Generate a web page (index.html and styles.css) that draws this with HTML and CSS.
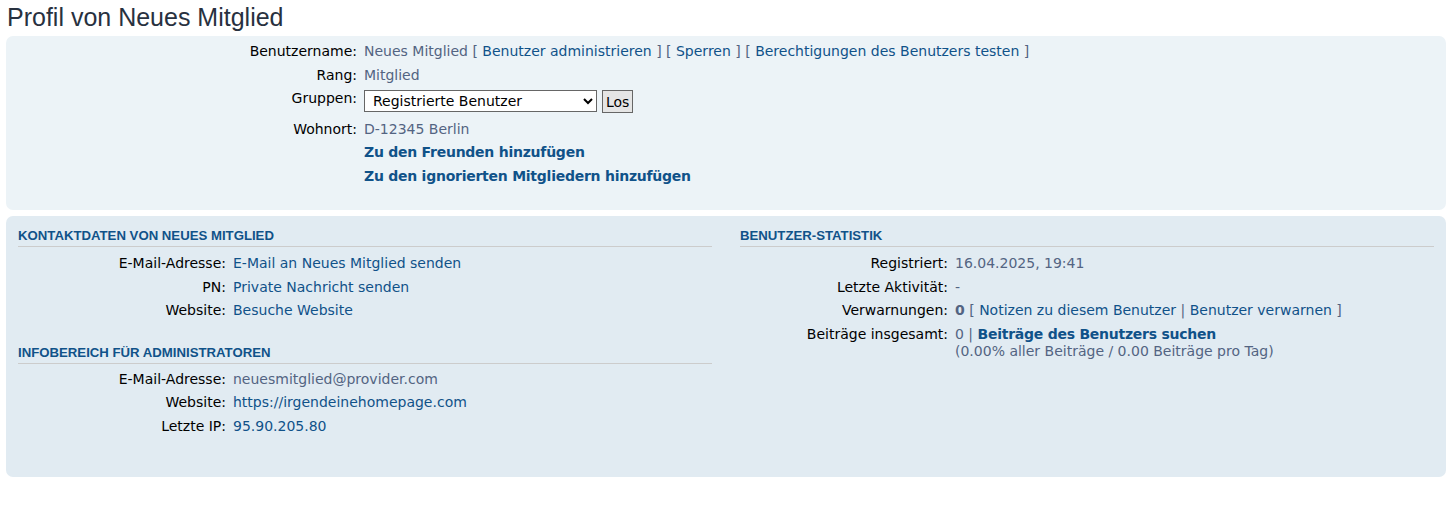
FILE: index.html
```html
<!DOCTYPE html>
<html lang="de">
<head>
<meta charset="utf-8">
<title>Profil von Neues Mitglied</title>
<link rel="stylesheet" href="styles.css">
</head>
<body>
<div class="page">
  <h2 class="title">Profil von Neues Mitglied</h2>

  <div class="panel panel-light">
    <dl class="info top">
      <div class="row"><dt>Benutzername:</dt><dd><span class="val">Neues Mitglied</span> <span class="val">[</span> <a href="#">Benutzer administrieren</a> <span class="val">]</span> <span class="val">[</span> <a href="#">Sperren</a> <span class="val">]</span> <span class="val">[</span> <a href="#">Berechtigungen des Benutzers testen</a> <span class="val">]</span></dd></div>
      <div class="row"><dt>Rang:</dt><dd class="val">Mitglied</dd></div>
      <div class="row row-form"><dt>Gruppen:</dt><dd class="form"><select class="sel"><option>Registrierte Benutzer</option></select><button class="btn" type="button">Los</button></dd></div>
      <div class="row"><dt>Wohnort:</dt><dd class="val">D-12345 Berlin</dd></div>
      <div class="row"><dt></dt><dd><a class="strong" href="#">Zu den Freunden hinzufügen</a></dd></div>
      <div class="row"><dt></dt><dd><a class="strong" href="#">Zu den ignorierten Mitgliedern hinzufügen</a></dd></div>
    </dl>
  </div>

  <div class="panel panel-dark">
    <div class="cols">
      <div class="col">
        <h3 class="head">Kontaktdaten von Neues Mitglied</h3>
        <dl class="info side">
          <div class="row"><dt>E-Mail-Adresse:</dt><dd><a href="#">E-Mail an Neues Mitglied senden</a></dd></div>
          <div class="row"><dt>PN:</dt><dd><a href="#">Private Nachricht senden</a></dd></div>
          <div class="row"><dt>Website:</dt><dd><a href="#">Besuche Website</a></dd></div>
        </dl>
        <h3 class="head head-second">Infobereich für Administratoren</h3>
        <dl class="info side">
          <div class="row"><dt>E-Mail-Adresse:</dt><dd class="val">neuesmitglied@provider.com</dd></div>
          <div class="row"><dt>Website:</dt><dd><a href="#">https://irgendeinehomepage.com</a></dd></div>
          <div class="row"><dt>Letzte IP:</dt><dd><a href="#">95.90.205.80</a></dd></div>
        </dl>
      </div>
      <div class="col">
        <h3 class="head">Benutzer-Statistik</h3>
        <dl class="info side">
          <div class="row"><dt>Registriert:</dt><dd class="val">16.04.2025, 19:41</dd></div>
          <div class="row"><dt>Letzte Aktivität:</dt><dd class="val">-</dd></div>
          <div class="row"><dt>Verwarnungen:</dt><dd><strong class="val">0</strong> <span class="val">[</span> <a href="#">Notizen zu diesem Benutzer</a> <span class="val">|</span> <a href="#">Benutzer verwarnen</a> <span class="val">]</span></dd></div>
          <div class="row"><dt>Beiträge insgesamt:</dt><dd><span class="val">0 |</span> <a class="strong" href="#">Beiträge des Benutzers suchen</a><br><span class="val">(0.00% aller Beiträge / 0.00 Beiträge pro Tag)</span></dd></div>
        </dl>
      </div>
    </div>
  </div>
</div>
</body>
</html>
```

FILE: styles.css
```css
html, body {
  margin: 0;
  padding: 0;
  background: #ffffff;
}

body {
  font-family: "DejaVu Sans", Verdana, sans-serif;
  font-size: 14px;
  color: #000000;
}

.page {
  padding: 0 7px 0 6px;
}

.title {
  margin: 0;
  padding: 2px 0 0 1px;
  height: 36px;
  box-sizing: border-box;
  font-family: "Liberation Sans", Arial, sans-serif;
  font-size: 25px;
  font-weight: normal;
  line-height: 30px;
  color: #28313f;
}

.panel {
  border-radius: 7px;
  margin-bottom: 6px;
}

.panel-light {
  background: #ecf3f7;
  height: 174px;
  padding-top: 4px;
  box-sizing: border-box;
}

.panel-dark {
  background: #e1ebf2;
  height: 261px;
  padding: 12px 12px 0 12px;
  box-sizing: border-box;
}

.info {
  margin: 0;
}

.row {
  display: flex;
  line-height: 17px;
  padding: 3px 0 3.5px 0;
}

.info dt {
  flex: none;
  text-align: right;
}

.info dd {
  margin: 0;
}

.top dt {
  width: 351px;
  margin-right: 7px;
}

.side dt {
  width: 208px;
  margin-right: 7px;
}

.row-form {
  height: 30.5px;
  box-sizing: border-box;
}

.form {
  display: flex;
  gap: 5px;
}

.sel {
  width: 233px;
  height: 22px;
  font-family: "DejaVu Sans", Verdana, sans-serif;
  font-size: 14px;
  color: #000;
  background: #ffffff;
  border: 1px solid #666666;
  padding: 0 2px 0 4px;
  border-radius: 0;
}

.btn {
  height: 23px;
  padding: 0 3px;
  font-family: "DejaVu Sans", Verdana, sans-serif;
  font-size: 14px;
  color: #000;
  background: #e5e5e5;
  border: 1px solid #666666;
  border-radius: 0;
}

.val {
  color: #536482;
}

a {
  color: #105289;
  text-decoration: none;
}

a.strong {
  font-weight: bold;
  letter-spacing: -0.25px;
}

strong.val {
  font-weight: bold;
}

.cols {
  display: flex;
  gap: 28px;
}

.col {
  width: 694px;
}

.head {
  margin: 0 0 5px 0;
  padding: 0 0 2px 0;
  font-family: "Liberation Sans", Arial, sans-serif;
  font-size: 13.2px;
  font-weight: bold;
  line-height: 16px;
  text-transform: uppercase;
  color: #105289;
  border-bottom: 1px solid #cccccc;
}

.head-second {
  margin-top: 22px;
  margin-bottom: 4px;
}
```
